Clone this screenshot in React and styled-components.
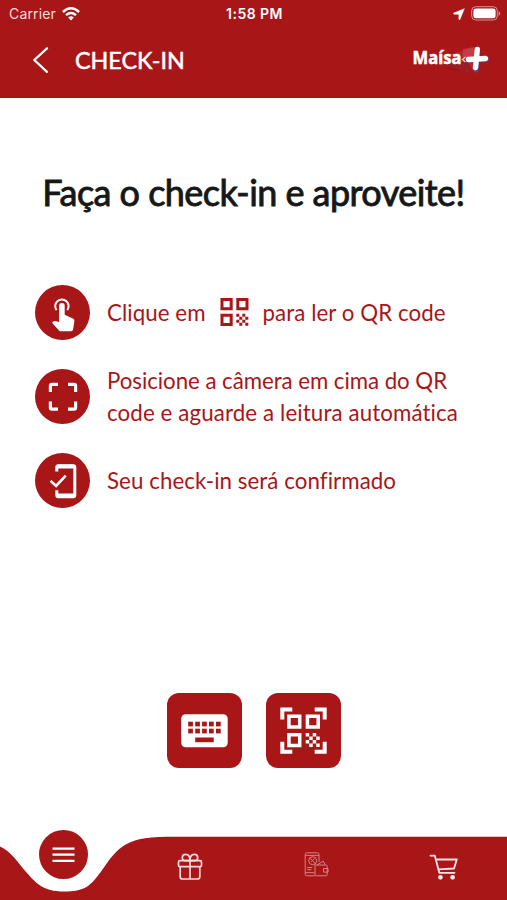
import styled, { createGlobalStyle } from "styled-components";

const RED = "#a81618";

const GlobalStyle = createGlobalStyle`
  body {
    margin: 0;
    background: #fff;
  }

  * {
    box-sizing: border-box;
  }
`;

const Screen = styled.div`
  display: flex;
  flex-direction: column;
  width: 507px;
  height: 900px;
  overflow: hidden;
  background: #fff;
  font-family: Lato, sans-serif;
  font-variant-ligatures: none;
`;

const Header = styled.header`
  flex: none;
  height: 98px;
  background: ${RED};
  color: #fff;
`;

const StatusBar = styled.div`
  display: grid;
  grid-template-columns: 1fr auto 1fr;
  align-items: center;
  height: 27px;
  padding: 0 6px 0 9px;
  font-family: Inter, sans-serif;
  font-size: 14px;
  line-height: 27px;
`;

const StatusSide = styled.div`
  display: flex;
  align-items: center;
  justify-content: ${(props) => (props.$end ? "flex-end" : "flex-start")};
  gap: 6px;
  color: ${(props) => (props.$end ? "#fff" : "#f7dfdf")};
`;

const Carrier = styled.span`
  letter-spacing: 0.15px;
`;

const Time = styled.span`
  margin-right: 1px;
  font-size: 14px;
  font-weight: 600;
  letter-spacing: 0.45px;
`;

const TitleBar = styled.div`
  display: flex;
  align-items: center;
  height: 66px;
  padding: 0 17px 0 32px;
`;

const IconButton = styled.button`
  display: flex;
  padding: 0;
  border: none;
  background: none;
  color: #fff;
  cursor: pointer;
`;

const PageTitle = styled.h1`
  flex: 1;
  margin: 0 0 0 26px;
  font-size: 23.3px;
  font-weight: 400;
  line-height: 30px;
  -webkit-text-stroke: 0.5px #fff;
`;

const Main = styled.main`
  flex: 1;
  display: flex;
  flex-direction: column;
`;

const Heading = styled.h2`
  margin: 69px 0 0;
  color: #161818;
  font-size: 36px;
  font-weight: 400;
  letter-spacing: -0.55px;
  line-height: 50px;
  text-align: center;
  white-space: nowrap;
  -webkit-text-stroke: 0.9px #161818;
`;

const Steps = styled.ol`
  display: flex;
  flex-direction: column;
  gap: 29px;
  margin: 67.5px 0 0;
  padding: 0 0 0 35px;
  list-style: none;
`;

const Step = styled.li`
  display: flex;
  align-items: center;
  gap: 17px;
  height: 55px;
`;

const StepIcon = styled.span`
  flex: none;
  display: flex;
  width: 55px;
  height: 55px;
  border-radius: 50%;
  background: ${RED};
`;

const StepText = styled.div`
  margin-top: 1px;
  color: ${RED};
  font-size: 22.3px;
  line-height: 32px;
  white-space: nowrap;
`;

const StepLine = styled.p`
  display: flex;
  align-items: center;
  margin: 0;
  letter-spacing: ${(props) => props.$spacing ?? 0.06}px;

  svg {
    margin: -1px 14px 0;
  }
`;

const Actions = styled.div`
  display: flex;
  justify-content: center;
  gap: 24px;
  margin-top: 185.5px;
`;

const ActionButton = styled.button`
  width: 75px;
  height: 75px;
  padding: 0;
  border: none;
  border-radius: 12px;
  background: ${RED};
  cursor: pointer;

  svg {
    display: block;
  }
`;

const Nav = styled.nav`
  position: relative;
  flex: none;
  display: grid;
  grid-template-columns: repeat(4, 126.75px);
  height: 70px;
`;

const NavShape = styled.svg`
  position: absolute;
  inset: 0;
`;

const NavItem = styled.button`
  position: relative;
  display: flex;
  justify-content: center;
  align-items: flex-start;
  padding: ${(props) => props.$top ?? 23}px 0 0;
  border: none;
  background: none;
  cursor: pointer;
`;

const BackIcon = () => (
  <svg width="17" height="28" viewBox="0 0 17 28" fill="none" stroke="currentColor" strokeWidth="2.3" strokeLinecap="round" strokeLinejoin="round">
    <path d="M15 2.4 2.3 14 15 25.8" />
  </svg>
);

const WifiIcon = () => (
  <svg width="18" height="14" viewBox="0 0 18 14" fill="none" stroke="#fff" strokeWidth="2.4">
    <path d="M.9 5Q9-2.4 17.1 5M4 8.2q5-4.2 10 0" />
    <path d="m9 13.6-2.8-3.2q2.8-2.1 5.6 0z" fill="#fff" stroke="none" />
  </svg>
);

const LocationIcon = () => (
  <svg width="12" height="12" viewBox="0 0 12 12" fill="#fff">
    <path d="M11.8.2 7.2 11.5Q6.2 12.5 5.6 11V6.4H1.2Q-.6 5.6.8 4.7z" />
  </svg>
);

const BatteryIcon = () => (
  <svg width="30" height="15" viewBox="0 0 30 15">
    <rect x=".7" y=".7" width="25.6" height="13.3" rx="4" fill="none" stroke="#d88f90" />
    <rect x="2.4" y="2.4" width="22.2" height="9.9" rx="2.4" fill="#fff" />
    <path d="M27.6 5v5q3.2-2.5 0-5z" fill="#d88f90" />
  </svg>
);

const Logo = () => (
  <svg width="79" height="32" viewBox="0 0 79 32">
    <path d="m34 12 30-9 3 24-11 1-26-7z" fill="#bd343d" opacity=".6" />
    <path d="m52 5 11-2v10l-11 2z" fill="#ce555d" opacity=".5" />
    <path d="m27 19 30-1 6 10-20-1z" fill="#8f151f" opacity=".6" />
    <text x="1.5" y="20" fill="#fff" stroke="#fff" strokeWidth=".5" fontFamily="'Noto Sans', sans-serif" fontSize="17.5" fontWeight="700" textLength="49" lengthAdjust="spacingAndGlyphs">
      Maísa
    </text>
    <path d="m54.5 13-3 2.5 3 2.5" fill="none" stroke="#f3cccc" strokeWidth="1.3" />
    <path d="M66.5 5 65.3 26M58 16.3l17.5-1" stroke="#694285" strokeWidth="5" strokeLinecap="round" />
    <path d="M66.3 5.5 64.5 23.5M57.5 15.5l17-1" stroke="#fff" strokeWidth="5.4" strokeLinecap="round" />
  </svg>
);

const TouchIcon = () => (
  <svg width="55" height="55" viewBox="0 0 55 55" fill="#fff">
    <path d="M21.6 25.2a6.7 6.7 0 1 1 10.6 0" fill="none" stroke="#fff" strokeWidth="2" />
    <path d="M24.1 20.8a2.8 2.8 0 0 1 5.6 0v9l8.2 3.7q1.7.8 1.5 2.6l-1.3 8.5q-.3 1.7-2 1.7H26q-1.2 0-2-.9l-7-7.7 1.5-1.4q.7-.6 1.6-.3l4 .9z" />
  </svg>
);

const FrameIcon = () => (
  <svg width="55" height="55" viewBox="0 0 55 55" fill="none" stroke="#fff" strokeWidth="3.2">
    <path d="M15.4 23v-6q0-1.6 1.6-1.6h6M33 15.4h6q1.6 0 1.6 1.6v6M15.4 32.5v6q0 1.6 1.6 1.6h6M33 40.1h6q1.6 0 1.6-1.6v-6" />
  </svg>
);

const ConfirmedIcon = () => (
  <svg width="55" height="55" viewBox="0 0 55 55" fill="none" stroke="#fff">
    <path d="M21.8 18.5v-4.4q0-1.4 1.4-1.4h15.2q1.4 0 1.4 1.4v28.2q0 1.4-1.4 1.4H23.2q-1.4 0-1.4-1.4v-5" strokeWidth="3" />
    <path d="M23 13.5h16M23 42.5h16" strokeWidth="4" />
    <path d="m15.5 27.7 5.6 5.2 9.6-10.3" strokeWidth="2.6" />
  </svg>
);

// finder squares and the checkered corner, on a 28 unit grid
const QrShape = ({ color }) => (
  <g fill="none" stroke={color} strokeWidth="3">
    <path d="M1.5 1.5h9.2v9.2H1.5zM17.3 1.5h9.2v9.2h-9.2zM1.5 17.3h9.2v9.2H1.5z" />
    <path
      d="M15.8 15.8h3v3h-3zM21.8 15.8h3v3h-3zM18.8 18.8h3v3h-3zM24.8 18.8h3v3h-3zM15.8 21.8h3v3h-3zM21.8 21.8h3v3h-3zM18.8 24.8h3v3h-3zM24.8 24.8h3v3h-3z"
      fill={color}
      stroke="none"
    />
  </g>
);

const QrIcon = () => (
  <svg width="29" height="28" viewBox="0 0 28 28">
    <QrShape color={RED} />
  </svg>
);

const KeyboardIcon = () => (
  <svg width="75" height="75" viewBox="0 0 75 75">
    <rect x="14.2" y="21.3" width="46.5" height="33" rx="4.5" fill="#fff" />
    <g fill={RED}>
      {[28.7, 35.7].map((y) =>
        [21.2, 28.2, 35.1, 42, 49].map((x) => (
          <rect key={`${x}-${y}`} x={x} y={y} width="4.7" height="4.7" />
        ))
      )}
      <rect x="28.2" y="44.5" width="18.5" height="4.7" />
    </g>
  </svg>
);

const ScanIcon = () => (
  <svg width="75" height="75" viewBox="0 0 75 75">
    <path d="M16.3 26.5V16.4h10M48.7 16.4h10v10.1M16.3 48.7v10.1h10M48.7 58.8h10V48.7" fill="none" stroke="#fff" strokeWidth="4" />
    <g transform="translate(21.2 21.4) scale(1.17)">
      <QrShape color="#fff" />
    </g>
  </svg>
);

const MenuIcon = () => (
  <svg width="49" height="49" viewBox="0 0 49 49">
    <circle cx="24.5" cy="24.5" r="24.5" fill={RED} />
    <path d="M13.5 18.6h22M13.5 24.7h22M13.5 30.8h22" stroke="#fff" strokeWidth="2.2" />
  </svg>
);

const GiftIcon = () => (
  <svg width="26" height="28" viewBox="0 0 26 28" fill="none" stroke="#f8dddd" strokeWidth="1.7" strokeLinejoin="round">
    <rect x="1.5" y="7.7" width="23" height="6" rx="1.5" />
    <path d="M3.2 13.7v10q0 2.3 2.3 2.3h15q2.3 0 2.3-2.3v-10M13 7.7V26" />
    <path d="M13 7.7H8.6C4 7.7 4.3 1.3 8.8 1.3 12 1.3 13 4 13 7.7zM13 7.7h4.4c4.6 0 4.3-6.4-.2-6.4C14 1.3 13 4 13 7.7z" />
  </svg>
);

const WalletIcon = () => (
  <svg width="25" height="25" viewBox="0 0 25 25" fill="none" stroke="#d98284" strokeWidth="1">
    <path d="M15 10V2.4Q15 .8 13.4.8H2.7Q1.2.8 1.2 2.4v19.8q0 1.6 1.5 1.6h8.4M1.2 3.4H15M1.2 20.7h9.3" />
    <circle cx="8.7" cy="8.7" r="4" />
    <path d="m6 6.2 5.5 5.5M7.3 9.8l3-3.3M3.2 15.5h5M3.2 17.7h4M13 13l6.2-3.8 2 3.6" />
    <path d="M11 13h10.7q1.5 0 1.5 1.5v7.8q0 1.5-1.5 1.5h-9q-1.7 0-1.7-1.6zM24 16.5h-4.5v3.6H24z" />
  </svg>
);

const CartIcon = () => (
  <svg width="30" height="28" viewBox="0 0 30 28" fill="none" stroke="#fbe4e4" strokeWidth="1.8" strokeLinecap="round" strokeLinejoin="round">
    <path d="M1.5 1.7h4.3l4.5 17.1h15.2M7 5.5h20.8L25 14.5l-15.6.9" />
    <circle cx="11.4" cy="23.3" r="1.5" fill="#fff" />
    <circle cx="23.6" cy="23.3" r="1.5" fill="#fff" />
  </svg>
);

export default function App() {
  return (
    <Screen>
      <GlobalStyle />
      <Header>
        <StatusBar>
          <StatusSide>
            <Carrier>Carrier</Carrier>
            <WifiIcon />
          </StatusSide>
          <Time>1:58 PM</Time>
          <StatusSide $end>
            <LocationIcon />
            <BatteryIcon />
          </StatusSide>
        </StatusBar>
        <TitleBar>
          <IconButton aria-label="Voltar">
            <BackIcon />
          </IconButton>
          <PageTitle>CHECK-IN</PageTitle>
          <Logo />
        </TitleBar>
      </Header>

      <Main>
        <Heading>Faça o check-in e aproveite!</Heading>
        <Steps>
          <Step>
            <StepIcon>
              <TouchIcon />
            </StepIcon>
            <StepText>
              <StepLine>
                Clique em <QrIcon /> para ler o QR code
              </StepLine>
            </StepText>
          </Step>
          <Step>
            <StepIcon>
              <FrameIcon />
            </StepIcon>
            <StepText>
              <StepLine $spacing={-0.06}>Posicione a câmera em cima do QR</StepLine>
              <StepLine $spacing={0.11}>code e aguarde a leitura automática</StepLine>
            </StepText>
          </Step>
          <Step>
            <StepIcon>
              <ConfirmedIcon />
            </StepIcon>
            <StepText>
              <StepLine>Seu check-in será confirmado</StepLine>
            </StepText>
          </Step>
        </Steps>
        <Actions>
          <ActionButton aria-label="Digitar código">
            <KeyboardIcon />
          </ActionButton>
          <ActionButton aria-label="Ler QR code">
            <ScanIcon />
          </ActionButton>
        </Actions>
      </Main>

      <Nav>
        <NavShape width="507" height="70" viewBox="0 0 507 70">
          <path d="M0 16.5C12 22 18 33 27 43S43 61.5 64 61.5S90 56 100 43C116 21 121 6.7 167 6.7H507V70H0z" fill={RED} />
        </NavShape>
        <NavItem $top={0} aria-label="Menu">
          <MenuIcon />
        </NavItem>
        <NavItem aria-label="Benefícios">
          <GiftIcon />
        </NavItem>
        <NavItem $top={22} aria-label="Carteira">
          <WalletIcon />
        </NavItem>
        <NavItem $top={24} aria-label="Carrinho">
          <CartIcon />
        </NavItem>
      </Nav>
    </Screen>
  );
}
